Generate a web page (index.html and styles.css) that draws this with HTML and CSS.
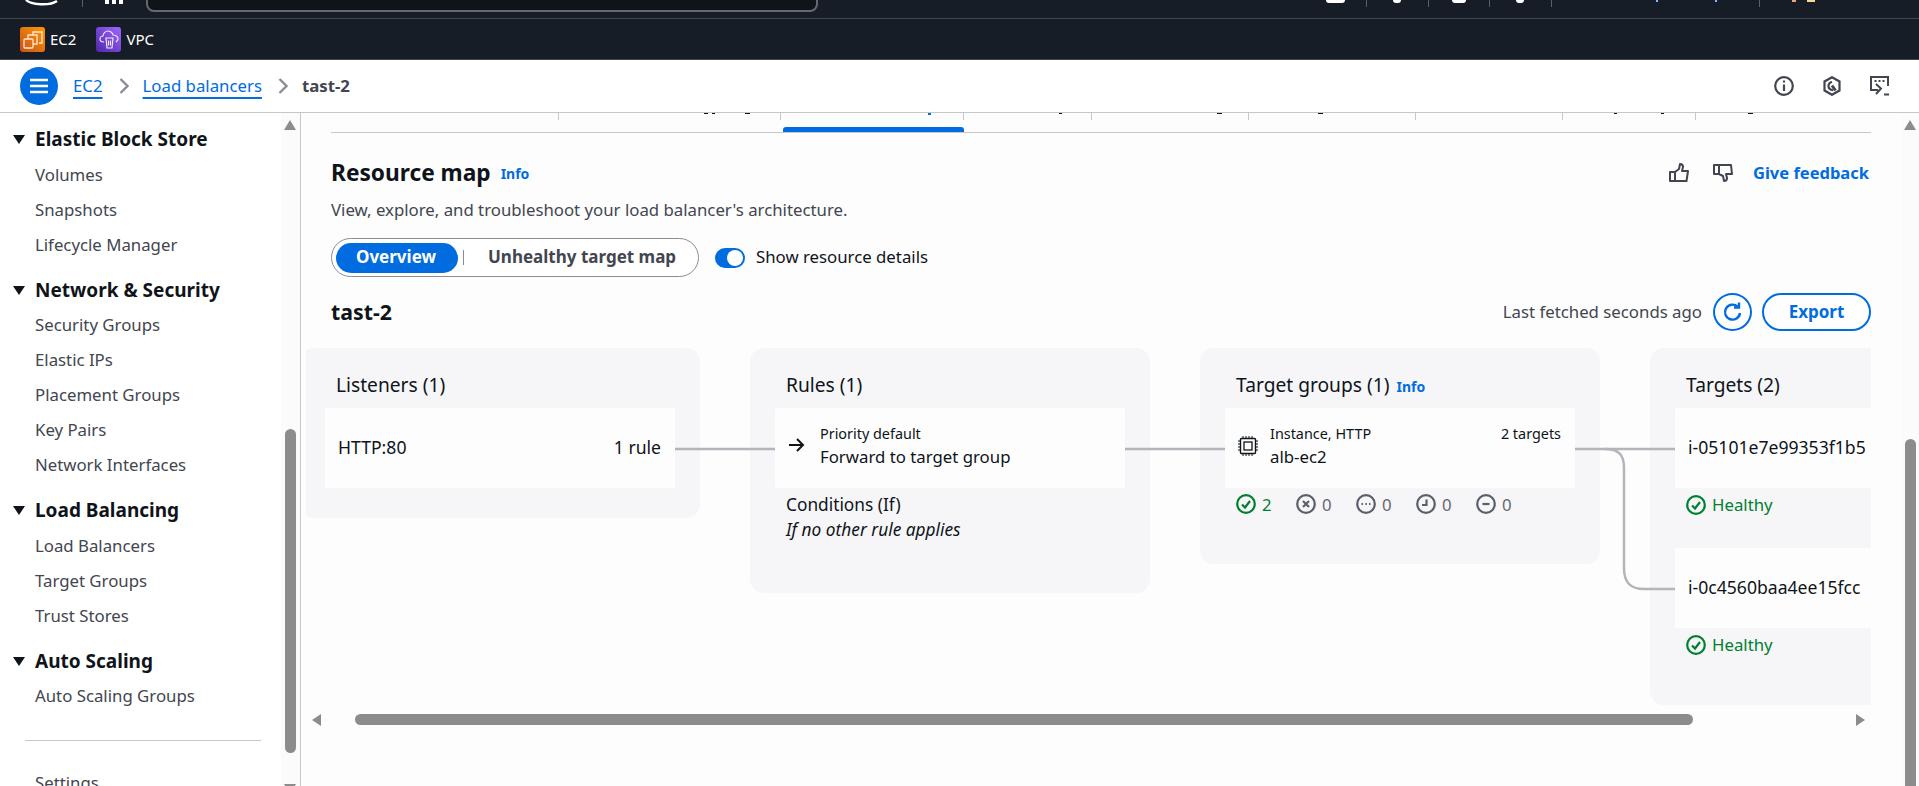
FILE: index.html
```html
<!DOCTYPE html>
<html lang="en">
<head>
<meta charset="utf-8">
<title>Load balancer tast-2 | EC2</title>
<link rel="stylesheet" href="styles.css">
</head>
<body>
<header class="topbar">
  <svg class="logo-cut" width="36" height="6" viewBox="0 0 36 6"><path d="M1 0c5 5 24 6 31 1" fill="none" stroke="#fff" stroke-width="2.4"/></svg>
  <span class="top-div d0"></span>
  <svg class="grid-cut" width="20" height="5" viewBox="0 0 20 5"><path d="M1 0h4v4H1zM8 0h4v4H8zM15 0h4v4h-4z" fill="#fff"/></svg>
  <div class="search"></div>
  <span class="tick t1"></span><span class="top-div d1"></span>
  <span class="tick t2"></span><span class="top-div d2"></span>
  <span class="tick t3"></span><span class="top-div d3"></span>
  <span class="tick t4"></span><span class="top-div d4"></span>
  <span class="tick t5"></span><span class="tick t6"></span><span class="top-div d5"></span>
  <span class="tick t7"></span><span class="tick t8"></span>
</header>
<nav class="shortcuts">
  <a class="shortcut"><span class="svc ec2"><svg width="25" height="25" viewBox="0 0 25 25" fill="none" stroke="#fde6d3" stroke-width="1.300"><path d="M13 8V5h9v11h-3"/><path d="M8 12V8h9v9h-4"/><rect x="4" y="12" width="9" height="9" rx="1"/></svg></span>EC2</a>
  <a class="shortcut"><span class="svc vpc"><svg width="25" height="25" viewBox="0 0 25 25" fill="none" stroke="#efe6ff" stroke-width="1.200"><path d="M8 15c-3 0-4-1-4-3s2-3 3-3c0-3 3-5 5-5s5 2 5 4c3 0 5 2 5 4 0 1-1 2-2 3"/><path d="M10 11h7l-1 10h-5zM12.500 13.500v5M14.500 13.500v5"/></svg></span>VPC</a>
</nav>
<div class="crumbbar">
  <button class="menu-btn" aria-label="Menu"><svg width="18" height="16" viewBox="0 0 18 16" stroke="#fff" stroke-width="2.4"><path d="M0 2h18M0 8h18M0 14h18"/></svg></button>
  <a class="crumb-link">EC2</a>
  <svg class="chev" width="10" height="16" viewBox="0 0 10 16"><path d="M1.500 1l7 7-7 7" fill="none" stroke="#8c8c94" stroke-width="2.400"/></svg>
  <a class="crumb-link">Load balancers</a>
  <svg class="chev" width="10" height="16" viewBox="0 0 10 16"><path d="M1.500 1l7 7-7 7" fill="none" stroke="#8c8c94" stroke-width="2.400"/></svg>
  <span class="crumb-current">tast-2</span>
  <div class="crumb-tools">
    <svg width="20" height="20" viewBox="0 0 20 20" fill="none" stroke="#424650" stroke-width="2.200"><circle cx="10" cy="10" r="8.800"/><path d="M10 8.500V15M10 4.500v2"/></svg>
    <svg width="20" height="20" viewBox="0 0 20 20" fill="none" stroke="#424650" stroke-width="2.200"><path d="M10 1.200l7.500 4.300v9L10 18.800l-7.500-4.300v-9z"/><path d="M10 6a4 4 0 1 0 1 8"/><path d="M10 9.500l3.500 5" stroke-width="3"/></svg>
    <svg width="20" height="20" viewBox="0 0 20 20" fill="none" stroke="#424650" stroke-width="2"><path d="M8 14H1V1h17v9"/><path d="M4.500 5h2M8.500 5h2M12.500 5h2"/><path d="M6 8l5 4.500L6 18"/><path d="M14 18.500h5"/></svg>
  </div>
</div>
<div class="workspace">
  <aside class="sidebar">
    <div class="side-list">
      <h3 class="side-head">Elastic Block Store</h3>
      <a class="side-item">Volumes</a>
      <a class="side-item">Snapshots</a>
      <a class="side-item">Lifecycle Manager</a>
      <h3 class="side-head">Network &amp; Security</h3>
      <a class="side-item">Security Groups</a>
      <a class="side-item">Elastic IPs</a>
      <a class="side-item">Placement Groups</a>
      <a class="side-item">Key Pairs</a>
      <a class="side-item">Network Interfaces</a>
      <h3 class="side-head">Load Balancing</h3>
      <a class="side-item">Load Balancers</a>
      <a class="side-item">Target Groups</a>
      <a class="side-item">Trust Stores</a>
      <h3 class="side-head">Auto Scaling</h3>
      <a class="side-item">Auto Scaling Groups</a>
      <hr class="side-rule">
      <a class="side-item">Settings</a>
    </div>
    <div class="side-scroll">
      <span class="arrow-up"></span>
      <span class="side-thumb"></span>
      <span class="arrow-down"></span>
    </div>
  </aside>
  <main class="main">
    <div class="tabs">
      <span class="tab w1"></span><span class="tab w2"></span>
      <span class="tab w3 active"></span>
      <span class="tab w4"></span><span class="tab w5"></span><span class="tab w6"></span>
      <span class="tab w7"></span><span class="tab w8"></span>
    </div>
    <div class="title-row">
      <h2 class="title">Resource map</h2>
      <a class="info">Info</a>
      <div class="feedback">
        <svg width="20" height="20" viewBox="0 0 20 20" fill="none" stroke="#424650" stroke-width="2" stroke-linejoin="round"><path d="M1 9h5v9H1zM6 9l4-3 1-5c2 0 3 1 3 3l-1 4h6l-1.500 10H6"/></svg>
        <svg width="20" height="20" viewBox="0 0 20 20" fill="none" stroke="#424650" stroke-width="2" stroke-linejoin="round"><path d="M1 2h5v9H1zM6 2h12l1 9h-6l1 4c0 2-1 3-3 3l-1-5-4-2"/></svg>
        <a class="give">Give feedback</a>
      </div>
    </div>
    <p class="desc">View, explore, and troubleshoot your load balancer's architecture.</p>
    <div class="controls">
      <div class="segment">
        <span class="seg on">Overview</span>
        <span class="seg-div"></span>
        <span class="seg off">Unhealthy target map</span>
      </div>
      <span class="toggle"><span class="knob"></span></span>
      <span class="toggle-label">Show resource details</span>
    </div>
    <div class="lb-row">
      <h3 class="lb-name">tast-2</h3>
      <span class="fetched">Last fetched seconds ago</span>
      <button class="refresh" aria-label="Refresh"><svg width="22" height="22" viewBox="0 0 22 22" fill="none" stroke="#006ce0" stroke-width="2.400"><path d="M18 12a7.500 7.500 0 1 1-2.500-6.500"/><path d="M17 1.500v5h-5"/></svg></button>
      <button class="export">Export</button>
    </div>
    <div class="map">
      <div class="track">
        <svg class="wires" width="1600" height="300" viewBox="0 0 1600 300" fill="none" stroke="#b4b4bb" stroke-width="2.500">
          <path d="M375 101h100"/>
          <path d="M825 101h100"/>
          <path d="M1275 101h100"/>
          <path d="M1305 101c14 0 19 6 19 19v100c0 14 6 21 20 21h31"/>
        </svg>
        <section class="col c-listeners">
          <h4 class="col-title">Listeners (1)</h4>
          <div class="node center"><span>HTTP:80</span><span>1 rule</span></div>
        </section>
        <section class="col c-rules">
          <h4 class="col-title">Rules (1)</h4>
          <div class="node">
            <svg class="arrow-ic" width="16" height="14" viewBox="0 0 16 14" fill="none" stroke="#0f141a" stroke-width="2"><path d="M0 7h14M8 1l6 6-6 6"/></svg>
            <div class="node-text"><span class="small">Priority default</span><span>Forward to target group</span></div>
          </div>
          <div class="cond"><div>Conditions (If)</div><em>If no other rule applies</em></div>
        </section>
        <section class="col c-groups">
          <h4 class="col-title">Target groups (1) <a class="info inline">Info</a></h4>
          <div class="node">
            <svg class="chip" width="20" height="20" viewBox="0 0 20 20" fill="none" stroke="#0f141a"><rect x="2.500" y="2.500" width="15" height="15" rx="1" stroke-width="1.400"/><rect x="6" y="6" width="8" height="8" stroke-width="1.300"/><path d="M5 0v2.500M8 0v2.500M11 0v2.500M14 0v2.500M5 17.500V20M8 17.500V20M11 17.500V20M14 17.500V20M0 5h2.500M0 8h2.500M0 11h2.500M0 14h2.500M17.500 5H20M17.500 8H20M17.500 11H20M17.500 14H20"/></svg>
            <div class="node-text"><span class="small">Instance, HTTP</span><span>alb-ec2</span></div>
            <span class="small count">2 targets</span>
          </div>
          <div class="stats">
            <span class="stat ok"><svg width="20" height="20" viewBox="0 0 20 20" fill="none" stroke="#00802f" stroke-width="2.200"><circle cx="10" cy="10" r="8.800"/><path d="M6 10.500l3 3 5-6.500"/></svg>2</span>
            <span class="stat"><svg width="20" height="20" viewBox="0 0 20 20" fill="none" stroke="#5a5f6b" stroke-width="2.200"><circle cx="10" cy="10" r="8.800"/><path d="M7 7l6 6M13 7l-6 6"/></svg>0</span>
            <span class="stat"><svg width="20" height="20" viewBox="0 0 20 20" fill="none" stroke="#5a5f6b" stroke-width="2.200"><circle cx="10" cy="10" r="8.800"/><path d="M5.500 10h1.500M9.300 10h1.500M13 10h1.500"/></svg>0</span>
            <span class="stat"><svg width="20" height="20" viewBox="0 0 20 20" fill="none" stroke="#5a5f6b" stroke-width="2.200"><circle cx="10" cy="10" r="8.800"/><path d="M10.500 5.500V11H6"/></svg>0</span>
            <span class="stat"><svg width="20" height="20" viewBox="0 0 20 20" fill="none" stroke="#5a5f6b" stroke-width="2.200"><circle cx="10" cy="10" r="8.800"/><path d="M6.500 10h7"/></svg>0</span>
          </div>
        </section>
        <section class="col c-targets">
          <h4 class="col-title">Targets (2)</h4>
          <div class="node center"><span>i-05101e7e99353f1b5</span></div>
          <div class="health"><svg width="20" height="20" viewBox="0 0 20 20" fill="none" stroke="#00802f" stroke-width="2.200"><circle cx="10" cy="10" r="8.800"/><path d="M6 10.500l3 3 5-6.500"/></svg>Healthy</div>
          <div class="node center"><span>i-0c4560baa4ee15fcc</span></div>
          <div class="health"><svg width="20" height="20" viewBox="0 0 20 20" fill="none" stroke="#00802f" stroke-width="2.200"><circle cx="10" cy="10" r="8.800"/><path d="M6 10.500l3 3 5-6.500"/></svg>Healthy</div>
        </section>
      </div>
    </div>
    <div class="hscroll">
      <span class="arrow-left"></span>
      <span class="h-thumb"></span>
      <span class="arrow-right"></span>
    </div>
  </main>
  <div class="page-scroll">
    <span class="arrow-up"></span>
    <span class="page-thumb"></span>
  </div>
</div>
</body>
</html>
```
FILE: styles.css
```css
* { box-sizing: border-box; }
html, body { height: 100%; }
body {
  margin: 0;
  height: 786px;
  overflow: hidden;
  display: flex;
  flex-direction: column;
  background: #fdfdfd;
  color: #0f141a;
  font-family: "Noto Sans", "Open Sans", sans-serif;
  font-size: 16.8px;
}
h2, h3, h4, p { margin: 0; }

/* top bars */
.topbar {
  height: 19px;
  flex: none;
  display: flex;
  align-items: flex-start;
  background: #161d26;
  border-bottom: 1px solid #424650;
  overflow: hidden;
}
.logo-cut { margin-left: 25px; flex: none; }
.top-div { width: 1px; height: 7px; background: #5a5f6b; flex: none; }
.grid-cut { margin-left: 21px; flex: none; }
.search {
  margin-left: 22px;
  margin-top: -20px;
  width: 672px;
  height: 32px;
  background: #0f141a;
  border: 2px solid #656871;
  border-radius: 8px;
  flex: none;
}
.tick { display: block; height: 3px; background: #fff; flex: none; }
.d0 { margin-left: 21px; }
.t1 { width: 19px; height: 3px; margin-left: 508px; border-radius: 0 0 3px 3px; }
.d1 { margin-left: 21px; }
.t2 { width: 8px; margin-left: 26px; border-radius: 0 0 4px 4px; }
.d2 { margin-left: 27px; }
.t3 { width: 14px; margin-left: 23px; border-radius: 0 0 7px 7px; }
.d3 { margin-left: 23px; }
.t4 { width: 8px; margin-left: 26px; border-radius: 0 0 4px 4px; }
.d4 { margin-left: 27px; }
.t5 { width: 2px; height: 2px; margin-left: 104px; background: #7fb8ff; }
.t6 { width: 2px; height: 2px; margin-left: 57px; background: #7fb8ff; }
.d5 { margin-left: 42px; }
.t7 { width: 4px; height: 2px; margin-left: 32px; background: #f2a57c; }
.t8 { width: 8px; height: 2px; margin-left: 11px; background: #f5d9a0; }

.shortcuts {
  height: 41px;
  flex: none;
  display: flex;
  align-items: center;
  gap: 20px;
  padding-left: 20px;
  background: #161d26;
  border-bottom: 1px solid #424650;
}
.shortcut { display: flex; align-items: center; gap: 5px; color: #fff; font-size: 15px; }
.svc { width: 25px; height: 25px; border-radius: 3px; display: block; }
.svc svg { display: block; }
.ec2 { background: linear-gradient(45deg, #c8511b, #ff9900); }
.vpc { background: linear-gradient(45deg, #4d27a8, #a166ff); }

.crumbbar {
  height: 53px;
  flex: none;
  display: flex;
  align-items: center;
  padding: 0 29px 0 20px;
  background: #fff;
  border-bottom: 1px solid #c6c6cd;
}
.menu-btn {
  width: 38px;
  height: 38px;
  border: 0;
  border-radius: 50%;
  background: #006ce0;
  padding: 0;
  display: flex;
  align-items: center;
  justify-content: center;
  margin-right: 15px;
}
.crumb-link { color: #006ce0; text-decoration: underline; text-underline-offset: 5px; text-decoration-thickness: 1.500px; padding-bottom: 2px; }
.chev { margin: 0 14px 0 16px; flex: none; }
.crumb-current { font-weight: 700; color: #424650; padding-bottom: 2px; }
.crumb-tools { margin-left: auto; display: flex; align-items: center; gap: 28px; }

/* body */
.workspace { flex: 1; min-height: 0; display: flex; }
.sidebar {
  width: 301px;
  flex: none;
  display: flex;
  background: #fff;
  border-right: 1px solid #c6c6cd;
  overflow: hidden;
}
.side-list { width: 281px; flex: none; padding: 10px 0 0 35px; }
.side-head {
  font-size: 19px;
  font-weight: 700;
  line-height: 32px;
  margin-bottom: 1.500px;
  position: relative;
  color: #0f141a;
}
.side-head::before {
  content: "";
  position: absolute;
  left: -22px;
  top: 12px;
  border-left: 6.500px solid transparent;
  border-right: 6.500px solid transparent;
  border-top: 9px solid #0f141a;
}
.side-item + .side-head { margin-top: 12px; }
.side-item { display: block; line-height: 35px; color: #424650; }
.side-rule { margin: 27px 20px 23.500px -10px; border: 0; border-top: 1px solid #c6c6cd; }
.side-scroll { flex: 1; background: #fbfbfb; position: relative; }
.arrow-up {
  position: absolute;
  top: 7px;
  left: 3px;
  border-left: 6.500px solid transparent;
  border-right: 6.500px solid transparent;
  border-bottom: 10px solid #8c8c8c;
}
.arrow-down {
  position: absolute;
  top: 671px;
  left: 3px;
  border-left: 6.500px solid transparent;
  border-right: 6.500px solid transparent;
  border-top: 10px solid #8c8c8c;
}
.side-thumb {
  position: absolute;
  left: 4px;
  top: 316px;
  width: 11px;
  height: 324px;
  border-radius: 6px;
  background: #8c8c8c;
}

.main { flex: 1; min-width: 0; padding: 0 48px 0 30px; display: flex; flex-direction: column; }
.tabs {
  height: 20px;
  flex: none;
  display: flex;
  border-bottom: 1px solid #c6c6cd;
  background:
    linear-gradient(#0f141a, #0f141a) 373px 0 / 4px 1px no-repeat,
    linear-gradient(#0f141a, #0f141a) 381px 0 / 3px 1px no-repeat,
    linear-gradient(#0f141a, #0f141a) 414px 0 / 5px 1px no-repeat,
    linear-gradient(#006ce0, #006ce0) 597px 0 / 3px 2px no-repeat,
    linear-gradient(#0f141a, #0f141a) 728px 0 / 3px 1px no-repeat,
    linear-gradient(#0f141a, #0f141a) 886px 0 / 5px 1px no-repeat,
    linear-gradient(#0f141a, #0f141a) 987px 0 / 5px 1px no-repeat,
    linear-gradient(#0f141a, #0f141a) 1283px 0 / 3px 1px no-repeat,
    linear-gradient(#0f141a, #0f141a) 1330px 0 / 3px 1px no-repeat,
    linear-gradient(#0f141a, #0f141a) 1417px 0 / 5px 1px no-repeat;
}
.tab { display: block; height: 7px; border-right: 1px solid #c6c6cd; flex: none; position: relative; }
.w1 { width: 228px; }
.w2 { width: 222px; }
.w3 { width: 183px; }
.w4 { width: 128px; }
.w5 { width: 157px; }
.w6 { width: 167px; }
.w7 { width: 147px; }
.w8 { width: 133px; }
.tab.active::after {
  content: "";
  position: absolute;
  left: 2px;
  top: 14px;
  width: 181px;
  height: 5px;
  border-radius: 3px 3px 0 0;
  background: #006ce0;
}
.title-row { display: flex; align-items: center; margin-top: 23px; height: 34px; flex: none; }
.title { font-size: 22.700px; font-weight: 700; line-height: 34px; }
.info { color: #006ce0; font-size: 14px; font-weight: 700; margin-left: 10px; }
.info.inline { margin-left: 2px; }
.feedback { margin-left: auto; display: flex; align-items: center; }
.feedback svg + svg { margin-left: 24px; }
.give { color: #006ce0; font-weight: 700; font-size: 16.500px; margin: 0 2px 2px 20px; }
.desc { margin-top: 8px; line-height: 24px; color: #424650; flex: none; }
.controls { display: flex; align-items: center; margin-top: 16px; flex: none; }
.segment {
  width: 368px;
  height: 39px;
  border: 1px solid #8c8c94;
  border-radius: 20px;
  display: flex;
  align-items: center;
  padding-left: 4px;
  background: #fff;
}
.seg { font-weight: 700; font-size: 17px; }
.seg.off { padding-bottom: 2px; margin-left: -1px; }
.seg.on {
  width: 122px;
  height: 30px;
  border-radius: 15px;
  background: #006ce0;
  color: #fff;
  display: flex;
  align-items: center;
  justify-content: center;
  padding: 0 0 2px;
  text-indent: -2px;
}
.seg-div { width: 1px; height: 15px; background: #8c8c94; margin: 0 25px 0 5px; }
.seg.off { color: #424650; }
.toggle { width: 30px; height: 20px; border-radius: 10px; background: #006ce0; margin-left: 16px; display: flex; justify-content: flex-end; align-items: center; padding-right: 2px; }
.knob { width: 16px; height: 16px; border-radius: 50%; background: #fff; }
.toggle-label { margin-left: 11px; padding-bottom: 2px; }
.lb-row { display: flex; align-items: center; margin-top: 16px; height: 38px; flex: none; }
.lb-name { font-size: 21.300px; font-weight: 700; padding-bottom: 2px; }
.fetched { margin-left: auto; color: #424650; padding-bottom: 2px; }
.refresh {
  width: 39px; height: 38px; border: 2px solid #006ce0; border-radius: 50%;
  background: #fff; padding: 0; margin-left: 11px;
  display: flex; align-items: center; justify-content: center;
}
.export {
  width: 109px; height: 38px; border: 2px solid #006ce0; border-radius: 19px;
  background: #fff; color: #006ce0; font: 700 17px "Noto Sans", sans-serif; margin-left: 10px;
  padding: 0 0 2px;
}
.map { margin-left: -25px; margin-top: 17px; overflow: hidden; flex: none; height: 357px; }
.track { display: flex; gap: 50px; align-items: flex-start; margin-left: -6px; width: 1750px; position: relative; }
.wires { position: absolute; left: 0; top: 0; z-index: 2; }
.col { width: 400px; flex: none; background: #f6f6f9; border-radius: 14px; padding: 0 25px; }
.c-listeners { height: 170px; }
.c-rules { height: 245px; }
.c-groups { height: 216px; }
.c-targets { height: 357px; }
.col-title { font-size: 19.200px; font-weight: 400; line-height: 26px; padding: 24px 0 10px 11px; height: 60px; }
.node {
  height: 80px;
  background: #fdfdfd;
  border-radius: 2px;
  padding: 15px 14px 0 13px;
  display: flex;
}
.node.center { justify-content: space-between; padding-top: 27px; line-height: 24px; font-size: 17.600px; }
.node-text { display: flex; flex-direction: column; line-height: 24px; }
.small { font-size: 14.400px; line-height: 22px; }
.arrow-ic { margin: 15px 15px 0 1px; flex: none; }
.chip { margin: 13px 12px 0 0; flex: none; }
.count { margin-left: auto; }
.cond { padding: 4px 0 0 11px; line-height: 25px; font-size: 17.300px; }
.stats { display: flex; padding-left: 11px; height: 32px; align-items: center; }
.stat { width: 60px; display: flex; align-items: center; gap: 6px; color: #656871; }
.stat.ok { color: #00802f; }
.health { display: flex; align-items: center; gap: 6px; color: #00802f; height: 60px; padding: 0 0 27px 11px; }
.hscroll { position: relative; height: 12px; margin-top: 9px; flex: none; }
.h-thumb { position: absolute; left: 24px; top: 0; width: 1338px; height: 11px; border-radius: 6px; background: #8c8c8c; }
.arrow-left { position: absolute; left: -19px; top: 0; border-top: 6px solid transparent; border-bottom: 6px solid transparent; border-right: 9px solid #8c8c8c; }
.arrow-right { position: absolute; left: 1525px; top: 0; border-top: 6px solid transparent; border-bottom: 6px solid transparent; border-left: 9px solid #8c8c8c; }

.page-scroll { width: 18px; flex: none; position: relative; background: #fbfbfb; margin-left: -18px; }
.page-thumb { position: absolute; left: 4px; top: 326px; width: 11px; height: 360px; border-radius: 6px 6px 0 0; background: #8c8c8c; }
```
